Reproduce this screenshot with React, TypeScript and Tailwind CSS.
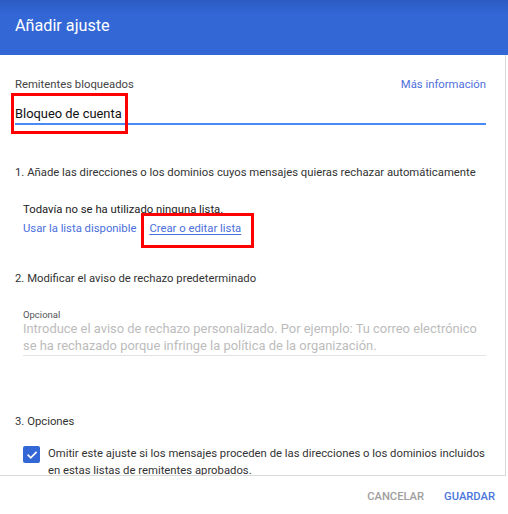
import React from "react";

const font = { fontFamily: "Roboto, 'Noto Sans', Arial, sans-serif" };

export default function App() {
  return (
    <div className="w-[508px] h-[514px] bg-white flex flex-col overflow-hidden" style={font}>
      <div className="h-[55px] shrink-0 bg-[linear-gradient(to_bottom,#2c5bc2,#3367d6_14px)] flex items-center px-[15px]">
        <h1 className="text-[16.2px] text-white font-normal leading-none pb-[2px]">Añadir ajuste</h1>
      </div>
      <div className="h-[421px] shrink-0 w-[506px] border-r border-b border-[#d9d9d9] overflow-hidden">
        <div className="pl-[15px] pr-[19px] pt-[23px]">
          <div className="flex justify-between items-center h-[14px] text-[11.3px] leading-[14px]">
            <span className="text-[#444]">Remitentes bloqueados</span>
            <span className="text-[#4e6fdc]">Más información</span>
          </div>
          <div className="relative mt-[15px]">
            <div className="text-[12.9px] leading-[14px] text-[#111] pb-[2px]">Bloqueo de cuenta</div>
            <div className="h-[2px] bg-[#4a8af4]" />
            <div className="absolute left-[-4px] top-[-14px] w-[117px] h-[41px] border-[3px] border-[#ff0000]" />
          </div>

          <div className="mt-[41px] text-[11.3px] leading-[14px] text-[#333] whitespace-nowrap">
            1. Añade las direcciones o los dominios cuyos mensajes quieras rechazar automáticamente
          </div>
          <div className="pl-[8px] mt-[23px] text-[11.3px] leading-[14px]">
            <div className="text-[#222]">Todavía no se ha utilizado ninguna lista.</div>
            <div className="flex gap-[13px] mt-[5px] text-[#4a6fdc]">
              <span>Usar la lista disponible</span>
              <span className="relative underline underline-offset-[2px]">
                Crear o editar lista
                <span className="absolute left-[-8px] top-[-9px] w-[113px] h-[35px] border-[3px] border-[#ff0000]" />
              </span>
            </div>
          </div>

          <div className="mt-[36px] text-[11.3px] leading-[14px] text-[#333]">
            2. Modificar el aviso de rechazo predeterminado
          </div>
          <div className="pl-[8px] mt-[24px]">
            <div className="text-[9.5px] leading-[10px] text-[#555]">Opcional</div>
            <div className="text-[12.9px] leading-[17px] text-[#bcbcbc] mt-0 pb-[1px] border-b border-[#e3e3e3]">
              Introduce el aviso de rechazo personalizado. Por ejemplo: Tu correo electrónico se ha rechazado porque infringe la política de la organización.
            </div>
          </div>

          <div className="mt-[59px] text-[11.3px] leading-[14px] text-[#333]">3. Opciones</div>
          <div className="flex items-start gap-[8px] pl-[8px] mt-[16px]">
            <div className="w-[17px] h-[17px] shrink-0 rounded-[2px] bg-[#3367d6] flex items-center justify-center mt-[1px]">
              <svg width="12" height="12" viewBox="0 0 24 24" fill="none" stroke="white" strokeWidth="3.4" strokeLinecap="square">
                <path d="M4.5 12.5l5 5L20 7" />
              </svg>
            </div>
            <div className="text-[11.3px] leading-[17px] text-[#333]">
              Omitir este ajuste si los mensajes proceden de las direcciones o los dominios incluidos en estas listas de remitentes aprobados.
            </div>
          </div>
        </div>
      </div>
      <div className="flex justify-end items-center gap-[20px] pr-[13px] pt-[14px] text-[11.2px] font-medium leading-[14px]">
        <span className="text-[#9e9e9e]">CANCELAR</span>
        <span className="text-[#4a76dc]">GUARDAR</span>
      </div>
    </div>
  );
}
